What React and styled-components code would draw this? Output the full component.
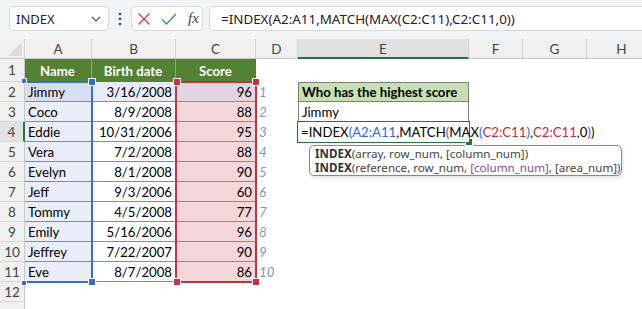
import React from 'react';
import styled, { createGlobalStyle } from 'styled-components';

const Global = createGlobalStyle`
  html, body { margin: 0; padding: 0; background: #fff; }
  body { font-family: Lato, "Liberation Sans", sans-serif; overflow: hidden; }
  * { box-sizing: border-box; }
`;

const COLS = '25px 67px 84px 80px 42px 171px 54px 64px 70px';
const ROWS = '20px 23px repeat(11, 20px) 10px';

const Page = styled.div`
  width: 642px;
  height: 309px;
  overflow: hidden;
  display: flex;
  flex-direction: column;
  background: #fff;
`;

const Toolbar = styled.div`
  flex: none;
  height: 39px;
  background: #f3f4f6;
  display: flex;
  align-items: flex-start;
  padding: 6px 0 0 9px;
  overflow: hidden;
  & > * { flex: none; }
`;

const NameBox = styled.div`
  width: 100px;
  height: 25px;
  background: #fff;
  border: 1px solid #d9d9d9;
  border-radius: 4px;
  display: flex;
  align-items: center;
  justify-content: space-between;
  padding: 0 7px 0 6px;
  font: 13px "Noto Sans", sans-serif;
  color: #222;
`;

const Dots = styled.div`
  width: 22px;
  height: 25px;
  display: flex;
  align-items: center;
  justify-content: center;
`;

const ButtonBox = styled.div`
  width: 72px;
  height: 25px;
  background: #fff;
  border: 1px solid #d9d9d9;
  border-radius: 4px;
  display: flex;
  align-items: center;
  padding-left: 5px;
  gap: 10px;
`;

const Fx = styled.span`
  font: italic 15px "Liberation Serif", serif;
  color: #444;
  margin-left: 1px;
`;

const FormulaBox = styled.div`
  width: 450px;
  height: 25px;
  margin-left: 6px;
  background: #fff;
  border: 1px solid #d9d9d9;
  border-radius: 4px;
  display: flex;
  align-items: center;
  padding-left: 11px;
  font: 13.4px "Noto Sans", sans-serif;
  color: #222;
  white-space: nowrap;
`;

const SheetWrap = styled.div`
  position: relative;
  flex: none;
`;

const Grid = styled.div`
  display: grid;
  grid-template-columns: ${COLS};
  grid-template-rows: ${ROWS};
`;

const Overlay = styled(Grid)`
  position: absolute;
  inset: 0;
  pointer-events: none;
`;

const Corner = styled.div`
  background: #f0f0f0;
  border-right: 1px solid #d0d0d0;
  border-bottom: 1px solid #c8c8c8;
  position: relative;
  &::after {
    content: '';
    position: absolute;
    right: 2px;
    bottom: 2px;
    border-left: 14px solid transparent;
    border-bottom: 14px solid #dcdcdc;
  }
`;

const ColHead = styled.div`
  background: ${p => (p.$active ? '#e1e1e1' : '#f0f0f0')};
  border-right: 1px solid #d0d0d0;
  border-bottom: ${p => (p.$active ? '2px solid #217346' : '1px solid #c8c8c8')};
  display: flex;
  align-items: center;
  justify-content: center;
  font-size: 13.5px;
  color: #444;
  padding-top: ${p => (p.$active ? '1px' : '0')};
`;

const RowHead = styled.div`
  background: ${p => (p.$active ? '#e1e1e1' : '#f0f0f0')};
  border-right: ${p => (p.$active ? '2px solid #217346' : '1px solid #c8c8c8')};
  border-bottom: 1px solid #d8d8d8;
  display: flex;
  align-items: center;
  justify-content: center;
  font-size: 13.5px;
  color: #444;
`;

const Cell = styled.div`
  background: ${p => p.$bg || '#fff'};
  color: ${p => p.$color || '#000'};
  font-weight: ${p => (p.$bold ? 700 : 400)};
  font-style: ${p => (p.$italic ? 'italic' : 'normal')};
  font-size: 13.2px;
  display: flex;
  align-items: center;
  justify-content: ${p => (p.$align === 'right' ? 'flex-end' : p.$align === 'center' ? 'center' : 'flex-start')};
  padding: 0 4px 0 3px;
  white-space: nowrap;
  overflow: visible;
  border-bottom: ${p => (p.$line ? `1px solid ${p.$line}` : 'none')};
  border-top: ${p => (p.$top ? `1px solid ${p.$top}` : 'none')};
  border-left: ${p => (p.$side ? `1px solid ${p.$side}` : 'none')};
  border-right: ${p => (p.$side || p.$sep ? `1px solid ${p.$side || p.$sep}` : 'none')};
  z-index: ${p => (p.$front ? 2 : 'auto')};
  position: relative;
`;

const Range = styled.div`
  grid-column: ${p => p.$col};
  grid-row: ${p => p.$row};
  position: relative;
  margin: -1px -1px -1px ${p => (p.$noLeft ? '0' : '-1px')};
  border: 2px solid ${p => p.$color};
  border-left-width: ${p => (p.$noLeft ? 0 : '2px')};
`;

const Handle = styled.span`
  position: absolute;
  width: ${p => p.$size || 6}px;
  height: ${p => p.$size || 6}px;
  background: ${p => p.$color};
  outline: 1px solid #fff;
  ${p => (p.$v === 'top' ? 'top: -4px;' : 'bottom: -4px;')}
  ${p => (p.$h === 'left' ? 'left: -3px;' : 'right: -4px;')}
`;

const Tip = styled.div`
  grid-column: 6 / 10;
  grid-row: 6 / 8;
  margin: 3px 0 0 11px;
  width: 313px;
  height: 31px;
  background: #fff;
  border: 1px solid #8a8a8a;
  border-radius: 5px;
  box-shadow: 1px 2px 4px rgba(0, 0, 0, 0.12);
  padding: 1px 0 0 5px;
  font: 11.6px "Noto Sans", sans-serif;
  color: #444;
  line-height: 14px;
  white-space: nowrap;
`;

const B = styled.b`
  font-weight: 700;
  color: #333;
`;

const Tok = styled.span`
  color: ${p => p.$c};
`;

const BLUE = '#2f6bd0';
const RED = '#c0303c';
const PURPLE = '#9b3aa0';

function Formula() {
  return (
    <>
      =INDEX<Tok $c={BLUE}>(</Tok>
      <Tok $c={BLUE}>A2:A11</Tok>,MATCH<Tok $c={PURPLE}>(</Tok>MAX<Tok $c={BLUE}>(</Tok>
      <Tok $c={RED}>C2:C11</Tok>
      <Tok $c={BLUE}>)</Tok>,<Tok $c={RED}>C2:C11</Tok>,0<Tok $c={PURPLE}>)</Tok>)
    </>
  );
}

const data = [
  ['Jimmy', '3/16/2008', 96],
  ['Coco', '8/9/2008', 88],
  ['Eddie', '10/31/2006', 95],
  ['Vera', '7/2/2008', 88],
  ['Evelyn', '8/1/2008', 90],
  ['Jeff', '9/3/2006', 60],
  ['Tommy', '4/5/2008', 77],
  ['Emily', '5/16/2006', 96],
  ['Jeffrey', '7/22/2007', 90],
  ['Eve', '8/7/2008', 86],
];

const LINE = '#8c8c8c';
const BOX = '#7f7f7f';

function extraCells(r) {
  if (r === 2) {
    return [
      <Cell key="e" $bg="#c6e0b4" $bold $top={BOX} $side={BOX} $line={BOX}>Who has the highest score</Cell>,
      <Cell key="f" />, <Cell key="g" />, <Cell key="h" />,
    ];
  }
  if (r === 3) {
    return [
      <Cell key="e" $side={BOX} $line={BOX}>Jimmy</Cell>,
      <Cell key="f" />, <Cell key="g" />, <Cell key="h" />,
    ];
  }
  if (r === 4) {
    return [
      <Cell key="e" $front><Formula /></Cell>,
      <Cell key="f" />, <Cell key="g" />, <Cell key="h" />,
    ];
  }
  return [<Cell key="e" />, <Cell key="f" />, <Cell key="g" />, <Cell key="h" />];
}

export default function App() {
  const rows = [];
  for (let r = 1; r <= 13; r++) {
    const cells = [<RowHead key="h" $active={r === 4}>{r <= 12 ? r : ''}</RowHead>];
    if (r === 1) {
      cells.push(
        <Cell key="a" $bg="#548235" $color="#fff" $bold $align="center" $sep="#8aa878">Name</Cell>,
        <Cell key="b" $bg="#548235" $color="#fff" $bold $align="center" $sep="#8aa878">Birth date</Cell>,
        <Cell key="c" $bg="#548235" $color="#fff" $bold $align="center">Score</Cell>,
        <Cell key="d" />,
        <Cell key="e" />, <Cell key="f" />, <Cell key="g" />, <Cell key="h" />
      );
    } else if (r <= 11) {
      const [n, d, s] = data[r - 2];
      const first = r === 2;
      cells.push(
        <Cell key="a" $bg={first ? '#d6dff1' : '#e9eef8'} $line={LINE}>{n}</Cell>,
        <Cell key="b" $bg={first ? '#e9ebf7' : '#fff'} $line={LINE} $align="right">{d}</Cell>,
        <Cell key="c" $bg={first ? '#e2d4e1' : '#f4d8d9'} $line={LINE} $align="right">{s}</Cell>,
        <Cell key="d" $italic $color="#8496b0">{r - 1}</Cell>,
        ...extraCells(r)
      );
    } else {
      cells.push(
        <Cell key="a" />, <Cell key="b" />, <Cell key="c" />, <Cell key="d" />,
        <Cell key="e" />, <Cell key="f" />, <Cell key="g" />, <Cell key="h" />
      );
    }
    rows.push(<React.Fragment key={r}>{cells}</React.Fragment>);
  }

  return (
    <Page>
      <Global />
      <Toolbar>
        <NameBox>
          INDEX
          <svg width="10" height="6" viewBox="0 0 10 6">
            <path d="M1 1l4 4 4-4" fill="none" stroke="#555" strokeWidth="1.2" />
          </svg>
        </NameBox>
        <Dots>
          <svg width="4" height="14" viewBox="0 0 4 14">
            <circle cx="2" cy="2" r="1.3" fill="#444" />
            <circle cx="2" cy="7" r="1.3" fill="#444" />
            <circle cx="2" cy="12" r="1.3" fill="#444" />
          </svg>
        </Dots>
        <ButtonBox>
          <svg width="14" height="14" viewBox="0 0 14 14">
            <path d="M1.5 1.5l11 11M12.5 1.5l-11 11" stroke="#e0393e" strokeWidth="1.3" />
          </svg>
          <svg width="16" height="14" viewBox="0 0 16 14">
            <path d="M1 7.5l4.5 4.5L15 2" fill="none" stroke="#2f9b4e" strokeWidth="1.3" />
          </svg>
          <Fx>fx</Fx>
        </ButtonBox>
        <FormulaBox>=INDEX(A2:A11,MATCH(MAX(C2:C11),C2:C11,0))</FormulaBox>
      </Toolbar>
      <SheetWrap>
        <Grid>
          <Corner />
          {['A', 'B', 'C', 'D', 'E', 'F', 'G', 'H'].map(c => (
            <ColHead key={c} $active={c === 'E'}>{c}</ColHead>
          ))}
          {rows}
        </Grid>
        <Overlay>
          <Range $col="2 / 3" $row="3 / 13" $color="#3b6cc7" $noLeft>
            <Handle $color="#3b6cc7" $v="top" $h="left" $size={4} />
            <Handle $color="#3b6cc7" $v="top" $h="right" />
            <Handle $color="#3b6cc7" $v="bottom" $h="left" $size={4} />
            <Handle $color="#3b6cc7" $v="bottom" $h="right" />
          </Range>
          <Range $col="4 / 5" $row="3 / 13" $color="#c23440">
            <Handle $color="#c23440" $v="top" $h="left" />
            <Handle $color="#c23440" $v="top" $h="right" />
            <Handle $color="#c23440" $v="bottom" $h="left" />
            <Handle $color="#c23440" $v="bottom" $h="right" />
          </Range>
          <Range $col="6 / 7" $row="5 / 6" $color="#217346">
            <Handle $color="#217346" $v="bottom" $h="right" />
          </Range>
          <Tip>
            <div><B>INDEX</B>(array, row_num, [column_num])</div>
            <div><B>INDEX</B>(reference, row_num, <Tok $c="#8a4a9a">[column_num]</Tok>, [area_num])</div>
          </Tip>
        </Overlay>
      </SheetWrap>
    </Page>
  );
}
